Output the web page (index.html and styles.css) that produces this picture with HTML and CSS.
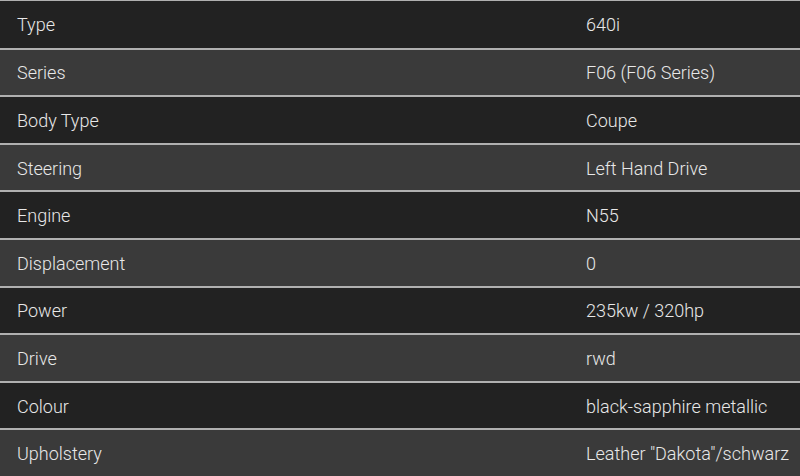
FILE: index.html
```
<!DOCTYPE html>
<html>
<head>
<meta charset="utf-8">
<link rel="stylesheet" href="styles.css">
</head>
<body>
<div class="specs">
  <div class="row odd"><span class="label">Type</span><span class="value">640i</span></div>
  <div class="row even"><span class="label">Series</span><span class="value">F06 (F06 Series)</span></div>
  <div class="row odd"><span class="label">Body Type</span><span class="value">Coupe</span></div>
  <div class="row even"><span class="label">Steering</span><span class="value">Left Hand Drive</span></div>
  <div class="row odd"><span class="label">Engine</span><span class="value">N55</span></div>
  <div class="row even"><span class="label">Displacement</span><span class="value">0</span></div>
  <div class="row odd"><span class="label">Power</span><span class="value">235kw / 320hp</span></div>
  <div class="row even"><span class="label">Drive</span><span class="value">rwd</span></div>
  <div class="row odd"><span class="label">Colour</span><span class="value">black-sapphire metallic</span></div>
  <div class="row even"><span class="label">Upholstery</span><span class="value">Leather "Dakota"/schwarz</span></div>
</div>
</body>
</html>
```
FILE: styles.css
```
html, body {
  margin: 0;
  padding: 0;
  background: #222222;
}
.specs {
  width: 800px;
  height: 476px;
  display: grid;
  grid-template-rows: repeat(10, 1fr);
  font-family: Roboto, "Liberation Sans", sans-serif;
  font-size: 18px;
  font-weight: 300;
  color: #e8e8e8;
}
.row {
  display: grid;
  grid-template-columns: 569px 1fr;
  align-items: center;
  border-top: 2px solid #b0b0b0;
}
.row:first-child {
  border-top-width: 1px;
}
.odd { background: #222222; }
.even { background: #3a3a3a; }
.label, .value {
  padding: 1px 17px 0;
  white-space: nowrap;
}
```
